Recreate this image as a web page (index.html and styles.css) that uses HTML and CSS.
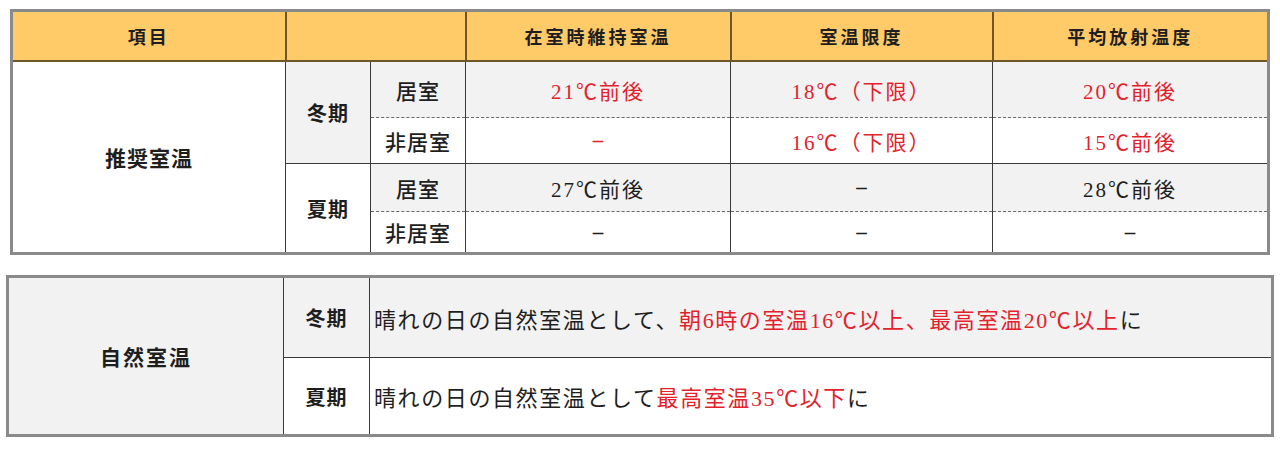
FILE: index.html
```html
<!DOCTYPE html>
<html lang="ja">
<head>
<meta charset="utf-8">
<link rel="stylesheet" href="styles.css">
</head>
<body>
<div class="page">
  <table class="t1">
    <colgroup>
      <col class="c1"><col class="c2"><col class="c3"><col class="c4"><col class="c5"><col class="c6">
    </colgroup>
    <tr class="head">
      <th>項目</th>
      <th colspan="2"></th>
      <th>在室時維持室温</th>
      <th>室温限度</th>
      <th>平均放射温度</th>
    </tr>
    <tr class="r1 gray">
      <td rowspan="4" class="label white">推奨室温</td>
      <td rowspan="2" class="season">冬期</td>
      <td class="room dash-b">居室</td>
      <td class="red dash-b">21℃前後</td>
      <td class="red dash-b">18℃（下限）</td>
      <td class="red dash-b">20℃前後</td>
    </tr>
    <tr class="r2">
      <td class="room dash-t">非居室</td>
      <td class="red dash-t"><span class="dash">–</span></td>
      <td class="red dash-t">16℃（下限）</td>
      <td class="red dash-t">15℃前後</td>
    </tr>
    <tr class="r3 gray">
      <td rowspan="2" class="season white">夏期</td>
      <td class="room dash-b">居室</td>
      <td class="dash-b">27℃前後</td>
      <td class="dash-b"><span class="dash">–</span></td>
      <td class="dash-b">28℃前後</td>
    </tr>
    <tr class="r4">
      <td class="room dash-t">非居室</td>
      <td class="dash-t"><span class="dash">–</span></td>
      <td class="dash-t"><span class="dash">–</span></td>
      <td class="dash-t"><span class="dash">–</span></td>
    </tr>
  </table>

  <table class="t2">
    <colgroup>
      <col class="d1"><col class="d2"><col class="d3">
    </colgroup>
    <tr class="s1 gray">
      <td rowspan="2" class="label">自然室温</td>
      <td class="season">冬期</td>
      <td class="desc">晴れの日の自然室温として、<span class="redt">朝6時の室温16℃以上、最高室温20℃以上</span>に</td>
    </tr>
    <tr class="s2">
      <td class="season">夏期</td>
      <td class="desc">晴れの日の自然室温として<span class="redt">最高室温35℃以下</span>に</td>
    </tr>
  </table>
</div>
</body>
</html>
```

FILE: styles.css
```css
html, body {
  margin: 0;
  padding: 0;
  background: #ffffff;
}

.page {
  padding-top: 9px;
  font-family: "Liberation Serif", "Noto Sans CJK JP", serif;
  color: #1e1e1e;
}

table {
  border-collapse: collapse;
  table-layout: fixed;
  border: 3px solid #8a8a8a;
}

td, th {
  padding: 0;
  border: 1px solid #3a3a3a;
  text-align: center;
  vertical-align: middle;
  font-size: 21px;
  letter-spacing: 2px;
  font-weight: 400;
}

.t1 {
  margin-left: 10px;
  width: 1257px;
}

.c1 { width: 274px; }
.c2 { width: 85px; }
.c3 { width: 95px; }
.c4 { width: 265px; }
.c5 { width: 262px; }
.c6 { width: 276px; }

.head th {
  height: 48px;
  background: #fecb68;
  border: 2px solid #6e5726;
  font-size: 18px;
  letter-spacing: 3px;
  font-weight: 700;
  font-family: "Noto Sans CJK JP", sans-serif;
}

.r1 td { height: 55px; }
.r2 td { height: 45px; }
.r3 td { height: 47px; }
.r4 td { height: 40px; }

.gray td { background: #f2f2f2; }
.gray td.white,
td.white { background: #ffffff; }

.label {
  font-family: "Noto Sans CJK JP", sans-serif;
  font-weight: 700;
  font-size: 21px;
  letter-spacing: 1px;
}

.season {
  font-family: "Noto Sans CJK JP", sans-serif;
  font-weight: 700;
  font-size: 20px;
  letter-spacing: 1px;
  background: #f2f2f2;
}

.room {
  font-family: "Noto Sans CJK JP", sans-serif;
  font-weight: 500;
  font-size: 21px;
  letter-spacing: 1px;
}

.red { color: #e3222b; }

.dash {
  font-weight: 700;
  letter-spacing: 0;
}

.dash-b { border-bottom: 1px dashed #6a6a6a; }
.dash-t { border-top: 1px dashed #6a6a6a; }

.t2 {
  margin-top: 20px;
  margin-left: 6px;
  width: 1265px;
}

.d1 { width: 276px; }
.d2 { width: 86px; }
.d3 { width: 903px; }

.s1 td { height: 79px; }
.s2 td { height: 76px; }

.t2 .label { background: #f2f2f2; letter-spacing: 2px; }
.t2 .s2 .season { background: #ffffff; }

.desc {
  text-align: left;
  padding-left: 4px;
  font-size: 22px;
  letter-spacing: 1.6px;
  font-family: "Liberation Serif", "Noto Sans CJK JP", serif;
}

.redt { color: #e3222b; }
```
